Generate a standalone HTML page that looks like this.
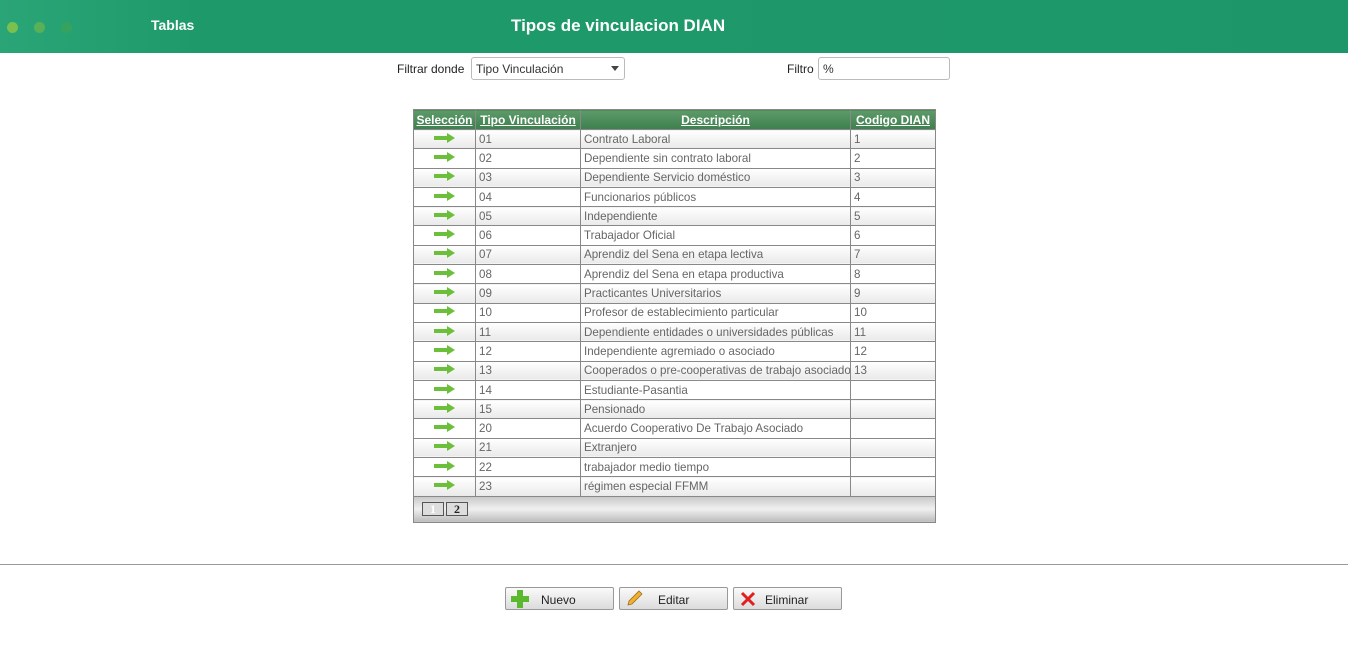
<!DOCTYPE html>
<html><head><meta charset="utf-8"><style>
body{margin:0;width:1348px;height:657px;background:#fff;font-family:"Liberation Sans",sans-serif;position:relative;overflow:hidden}
.top{position:absolute;left:0;top:0;width:1348px;height:53px;background:linear-gradient(90deg,#2aa577 0,#1e9a6a 200px,#1d976a 100%)}
.dot{position:absolute;top:22px;width:11px;height:11px;border-radius:50%}
.t1{position:absolute;left:151px;top:17px;color:#fff;font-weight:bold;font-size:14px}
.t2{position:absolute;left:511px;top:16px;color:#fff;font-weight:bold;font-size:17px}
.lbl{position:absolute;font-size:12px;color:#222}
.inp{position:absolute;border:1px solid #bbb;border-radius:3px;background:#fff;font-size:12px;color:#333;box-sizing:border-box;padding:4px 4px}
table{position:absolute;left:413px;top:109px;width:522px;table-layout:fixed;border-collapse:collapse;font-size:11.6px;border:1px solid #777}
td,th{border:1px solid #888;height:18.3px;padding:0 3px;color:#666;white-space:nowrap;overflow:hidden}
th{background:linear-gradient(#5e9a6a,#3d7f4d);color:#fff;text-decoration:underline;font-size:12px;height:19px;padding:0 1px}
tr:nth-child(odd) td{background:linear-gradient(#fff,#e9e9e9)}
.ar{text-align:center}
.foot td{height:25px;background:linear-gradient(#c8c8c8,#f0f0f0,#bdbdbd)!important;padding:0 8px}
.pg{display:inline-block;width:20px;height:12px;border:1px solid #555;font-size:12px;text-align:center;line-height:12px;font-weight:bold;font-family:"Liberation Serif",serif;margin-right:2px;background:#ddd}
.btn{position:absolute;top:587px;width:109px;height:23px;border:1px solid #999;border-radius:2px;background:linear-gradient(#fafafa,#dcdcdc);font-size:12px;color:#222;box-sizing:border-box}
.btn span{position:absolute;top:5px}
</style></head><body>
<div class="top">
<div class="dot" style="left:7px;background:#79c04e"></div>
<div class="dot" style="left:34px;background:#58b156"></div>
<div class="dot" style="left:61px;background:#36a25f"></div>
<div class="t1">Tablas</div>
<div class="t2">Tipos de vinculacion DIAN</div>
</div>
<div class="lbl" style="left:397px;top:62px">Filtrar donde</div>
<div class="inp" style="left:471px;top:57px;width:154px;height:23px">Tipo Vinculación<span style="position:absolute;right:5px;top:8px;border:4px solid transparent;border-top:5px solid #444"></span></div>
<div class="lbl" style="left:787px;top:62px">Filtro</div>
<div class="inp" style="left:818px;top:57px;width:132px;height:23px">%</div>
<table>
<colgroup><col style="width:62px"><col style="width:105px"><col style="width:270px"><col style="width:85px"></colgroup>
<tr><th>Selección</th><th>Tipo Vinculación</th><th>Descripción</th><th>Codigo DIAN</th></tr>
<tbody id="b"></tbody>
<tr class="foot"><td colspan="4"><span class="pg" style="color:#fff">1</span><span class="pg" style="color:#222">2</span></td></tr>
</table>
<div style="position:absolute;left:0;top:564px;width:1348px;border-top:1px solid #999"></div>
<div class="btn" style="left:505px"><svg style="position:absolute;left:5px;top:2px" width="18" height="18"><path d="M6 0h6v6h6v6h-6v6H6v-6H0V6h6z" fill="#5cb82e"/></svg><span style="left:35px">Nuevo</span></div>
<div class="btn" style="left:619px"><svg style="position:absolute;left:5px;top:2px" width="18" height="18"><path d="M3 15l1-4L14 1l3 3L7 14z" fill="#f0b030" stroke="#a07020" stroke-width=".8"/></svg><span style="left:38px">Editar</span></div>
<div class="btn" style="left:733px"><svg style="position:absolute;left:6px;top:3px" width="16" height="16"><path d="M2 2L14 14M14 2L2 14" stroke="#e02020" stroke-width="3"/></svg><span style="left:31px">Eliminar</span></div>
<script>
var d=[["01","Contrato Laboral","1"],["02","Dependiente sin contrato laboral","2"],["03","Dependiente Servicio doméstico","3"],["04","Funcionarios públicos","4"],["05","Independiente","5"],["06","Trabajador Oficial","6"],["07","Aprendiz del Sena en etapa lectiva","7"],["08","Aprendiz del Sena en etapa productiva","8"],["09","Practicantes Universitarios","9"],["10","Profesor de establecimiento particular","10"],["11","Dependiente entidades o universidades públicas","11"],["12","Independiente agremiado o asociado","12"],["13","Cooperados o pre-cooperativas de trabajo asociado","13"],["14","Estudiante-Pasantia",""],["15","Pensionado",""],["20","Acuerdo Cooperativo De Trabajo Asociado",""],["21","Extranjero",""],["22","trabajador medio tiempo",""],["23","régimen especial FFMM",""]];
var a='<svg width="22" height="10"><path d="M0 3h13V0l8 5-8 5V7H0z" fill="#6cbf3a"/></svg>',h='';
d.forEach(function(r){h+='<tr><td class="ar">'+a+'</td><td>'+r[0]+'</td><td>'+r[1]+'</td><td>'+r[2]+'</td></tr>'});
document.getElementById('b').innerHTML=h;
</script>
</body></html>
